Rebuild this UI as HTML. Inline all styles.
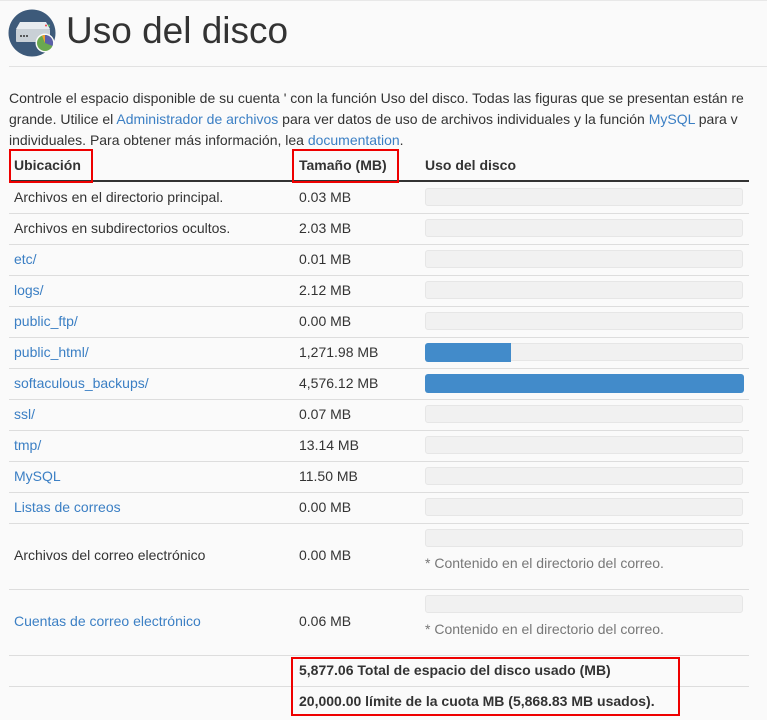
<!DOCTYPE html>
<html><head><meta charset="utf-8"><style>
body{margin:0;width:767px;height:720px;background:#fafafa;font-family:"Liberation Sans",sans-serif;color:#333;font-size:14px;overflow:hidden;position:relative}
.a{position:absolute;white-space:nowrap}
a{color:#3b7fc4;text-decoration:none}
.ln{position:absolute;left:9px;width:740px;height:1px;background:#ddd}
.bar{position:absolute;left:425px;width:318px;height:18px;background:#f1f1f1;border:1px solid #e6e6e6;border-radius:3px;box-sizing:border-box}
.fill{position:absolute;left:425px;height:19px;background:#428bca;border-radius:3px}
.red{position:absolute;border:2px solid #e00;box-sizing:border-box}
</style></head><body>
<div class="a" style="left:0;top:0;width:767px;height:1px;background:#e8e8e8"></div>
<svg class="a" style="left:8px;top:9px" width="50" height="50" viewBox="0 0 50 50">
<circle cx="24" cy="24" r="23.5" fill="#3d5a7a"/>
<path d="M8 20 L12 13 H38 L42 20 Z" fill="#e8ecf0"/>
<rect x="8" y="20" width="34" height="13" rx="1" fill="#c9d0d6"/>
<circle cx="13" cy="27" r="1" fill="#333"/><circle cx="16" cy="27" r="1" fill="#333"/><circle cx="19" cy="27" r="1" fill="#333"/>
<circle cx="38" cy="16.5" r="1" fill="#e44"/><circle cx="41" cy="16.5" r="1" fill="#6c6"/>
<circle cx="37" cy="34" r="9.5" fill="#fafafa"/>
<circle cx="37" cy="34" r="8" fill="#6aa84f"/>
<path d="M37 34 L37 26 A8 8 0 0 1 44.5 37 Z" fill="#5b5fa8"/>
<path d="M37 34 L34 26.6 A8 8 0 0 1 37 26 Z" fill="#f0a030"/>
</svg>
<div class="a" style="left:66px;top:10px;font-size:37px;color:#333">Uso del disco</div>
<div class="a" style="left:9px;top:66px;width:758px;height:1px;background:#e2e2e2"></div>
<div class="a" style="left:9px;top:88px;line-height:21px">Controle el espacio disponible de su cuenta ' con la función Uso del disco. Todas las figuras que se presentan están re<br>grande. Utilice el <a>Administrador de archivos</a> para ver datos de uso de archivos individuales y la función <a>MySQL</a> para v<br>individuales. Para obtener más información, lea <a>documentation</a>.</div>
<div class="a" style="left:14px;top:157px;font-weight:bold">Ubicación</div>
<div class="a" style="left:299px;top:157px;font-weight:bold">Tamaño (MB)</div>
<div class="a" style="left:425px;top:157px;font-weight:bold">Uso del disco</div>
<div class="a" style="left:9px;top:180px;width:740px;height:2px;background:#333"></div>
<div class="red" style="left:9px;top:149px;width:84px;height:34px"></div>
<div class="red" style="left:292px;top:149px;width:107px;height:34px"></div>

<div class="a" style="left:14px;top:189px">Archivos en el directorio principal.</div><div class="a" style="left:299px;top:189px">0.03 MB</div><div class="bar" style="top:188px"></div><div class="ln" style="top:213px"></div>
<div class="a" style="left:14px;top:220px">Archivos en subdirectorios ocultos.</div><div class="a" style="left:299px;top:220px">2.03 MB</div><div class="bar" style="top:219px"></div><div class="ln" style="top:244px"></div>
<div class="a" style="left:14px;top:251px"><a>etc/</a></div><div class="a" style="left:299px;top:251px">0.01 MB</div><div class="bar" style="top:250px"></div><div class="ln" style="top:275px"></div>
<div class="a" style="left:14px;top:282px"><a>logs/</a></div><div class="a" style="left:299px;top:282px">2.12 MB</div><div class="bar" style="top:281px"></div><div class="ln" style="top:306px"></div>
<div class="a" style="left:14px;top:313px"><a>public_ftp/</a></div><div class="a" style="left:299px;top:313px">0.00 MB</div><div class="bar" style="top:312px"></div><div class="ln" style="top:337px"></div>
<div class="a" style="left:14px;top:344px"><a>public_html/</a></div><div class="a" style="left:299px;top:344px">1,271.98 MB</div><div class="bar" style="top:343px"></div><div class="fill" style="top:343px;width:86px;border-radius:3px 0 0 3px"></div><div class="ln" style="top:368px"></div>
<div class="a" style="left:14px;top:375px"><a>softaculous_backups/</a></div><div class="a" style="left:299px;top:375px">4,576.12 MB</div><div class="fill" style="top:374px;width:319px"></div><div class="ln" style="top:399px"></div>
<div class="a" style="left:14px;top:406px"><a>ssl/</a></div><div class="a" style="left:299px;top:406px">0.07 MB</div><div class="bar" style="top:405px"></div><div class="ln" style="top:430px"></div>
<div class="a" style="left:14px;top:437px"><a>tmp/</a></div><div class="a" style="left:299px;top:437px">13.14 MB</div><div class="bar" style="top:436px"></div><div class="ln" style="top:461px"></div>
<div class="a" style="left:14px;top:468px"><a>MySQL</a></div><div class="a" style="left:299px;top:468px">11.50 MB</div><div class="bar" style="top:467px"></div><div class="ln" style="top:492px"></div>
<div class="a" style="left:14px;top:499px"><a>Listas de correos</a></div><div class="a" style="left:299px;top:499px">0.00 MB</div><div class="bar" style="top:498px"></div><div class="ln" style="top:523px"></div>
<div class="a" style="left:14px;top:547px">Archivos del correo electrónico</div><div class="a" style="left:299px;top:547px">0.00 MB</div><div class="bar" style="top:529px"></div><div class="a" style="left:425px;top:555px;color:#777">* Contenido en el directorio del correo.</div><div class="ln" style="top:589px"></div>
<div class="a" style="left:14px;top:613px"><a>Cuentas de correo electrónico</a></div><div class="a" style="left:299px;top:613px">0.06 MB</div><div class="bar" style="top:595px"></div><div class="a" style="left:425px;top:621px;color:#777">* Contenido en el directorio del correo.</div><div class="ln" style="top:655px"></div>
<div class="a" style="left:299px;top:662px;font-weight:bold">5,877.06 Total de espacio del disco usado (MB)</div><div class="ln" style="top:686px"></div>
<div class="a" style="left:299px;top:693px;font-weight:bold">20,000.00 límite de la cuota MB (5,868.83 MB usados).</div>
<div class="red" style="left:291px;top:657px;width:389px;height:59px"></div>
</body></html>
